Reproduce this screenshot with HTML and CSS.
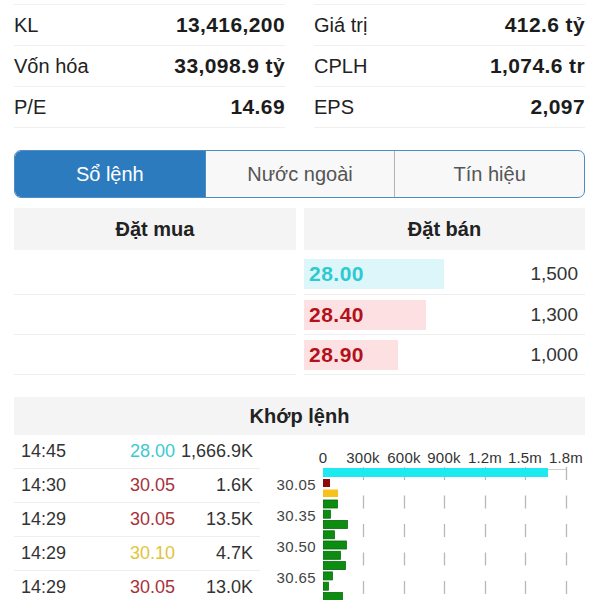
FILE: index.html
```html
<!DOCTYPE html>
<html lang="vi">
<head>
<meta charset="utf-8">
<title>Sổ lệnh</title>
<link rel="stylesheet" href="styles.css">
</head>
<body>
<div class="page">
  <section class="stats">
    <div class="col">
      <div class="row"><span class="lbl">KL</span><span class="val">13,416,200</span></div>
      <div class="row"><span class="lbl">Vốn hóa</span><span class="val">33,098.9 tỷ</span></div>
      <div class="row"><span class="lbl">P/E</span><span class="val">14.69</span></div>
    </div>
    <div class="col">
      <div class="row"><span class="lbl">Giá trị</span><span class="val">412.6 tỷ</span></div>
      <div class="row"><span class="lbl">CPLH</span><span class="val">1,074.6 tr</span></div>
      <div class="row"><span class="lbl">EPS</span><span class="val">2,097</span></div>
    </div>
  </section>

  <nav class="tabs">
    <div class="tab active">Sổ lệnh</div>
    <div class="tab">Nước ngoài</div>
    <div class="tab">Tín hiệu</div>
  </nav>

  <section class="book">
    <div class="book-col">
      <div class="book-head">Đặt mua</div>
      <div class="book-row"></div>
      <div class="book-row"></div>
      <div class="book-row"></div>
    </div>
    <div class="book-col sell">
      <div class="book-head">Đặt bán</div>
      <div class="book-row"><span class="bar ref" style="width:140px">28.00</span><span class="qty">1,500</span></div>
      <div class="book-row"><span class="bar up" style="width:122px">28.40</span><span class="qty">1,300</span></div>
      <div class="book-row"><span class="bar up" style="width:94px">28.90</span><span class="qty">1,000</span></div>
    </div>
  </section>

  <section class="match">
    <div class="match-head">Khớp lệnh</div>
    <div class="match-body">
      <div class="trades">
        <div class="trade"><span>14:45</span><span class="p ref">28.00</span><span class="v">1,666.9K</span></div>
        <div class="trade"><span>14:30</span><span class="p up">30.05</span><span class="v">1.6K</span></div>
        <div class="trade"><span>14:29</span><span class="p up">30.05</span><span class="v">13.5K</span></div>
        <div class="trade"><span>14:29</span><span class="p ceil">30.10</span><span class="v">4.7K</span></div>
        <div class="trade"><span>14:29</span><span class="p up">30.05</span><span class="v">13.0K</span></div>
      </div>
      <svg class="chart" width="338" height="165" viewBox="262 435 338 165" xmlns="http://www.w3.org/2000/svg">
        <g class="xlabels" text-anchor="middle">
          <text x="323" y="462.5">0</text>
          <text x="363" y="462.5">300k</text>
          <text x="404" y="462.5">600k</text>
          <text x="444" y="462.5">900k</text>
          <text x="485" y="462.5">1.2m</text>
          <text x="525" y="462.5">1.5m</text>
          <text x="566" y="462.5">1.8m</text>
        </g>
        <line x1="323" y1="469.5" x2="567" y2="469.5" stroke="#cfcfcf" stroke-width="1"/>
        <g stroke="#b8b8b8" stroke-width="1.3" stroke-dasharray="13 15.5">
          <line x1="363.5" y1="467" x2="363.5" y2="600"/>
          <line x1="404.5" y1="467" x2="404.5" y2="600"/>
          <line x1="444.5" y1="467" x2="444.5" y2="600"/>
          <line x1="485.5" y1="467" x2="485.5" y2="600"/>
          <line x1="525.5" y1="467" x2="525.5" y2="600"/>
          <line x1="566.5" y1="467" x2="566.5" y2="600"/>
        </g>
        <g class="ylabels" text-anchor="end">
          <text x="316" y="489.5">30.05</text>
          <text x="316" y="520.5">30.35</text>
          <text x="316" y="551.5">30.50</text>
          <text x="316" y="582.5">30.65</text>
        </g>
        <rect x="323" y="468" width="225" height="9" fill="#1ee8f0"/>
        <rect x="323" y="479" width="7" height="8" fill="#8e0a0a"/>
        <rect x="323" y="489.5" width="15" height="7.5" fill="#f8c21c"/>
        <g fill="#0c8c10" stroke="#06690a" stroke-width="0.8">
          <rect x="323.4" y="500" width="14" height="8"/>
          <rect x="323.4" y="510.2" width="7" height="8"/>
          <rect x="323.4" y="520.5" width="24" height="8"/>
          <rect x="323.4" y="530.8" width="11" height="8"/>
          <rect x="323.4" y="541" width="23" height="8"/>
          <rect x="323.4" y="551.3" width="17" height="8"/>
          <rect x="323.4" y="561.6" width="22" height="8"/>
          <rect x="323.4" y="571.9" width="9" height="8"/>
          <rect x="323.4" y="582.2" width="5" height="8"/>
          <rect x="323.4" y="592.5" width="19" height="8"/>
        </g>
      </svg>
    </div>
  </section>
</div>
</body>
</html>
```
FILE: styles.css
```css
* { box-sizing: border-box; }

html, body {
  margin: 0;
  background: #ffffff;
}

body {
  font-family: "Liberation Sans", Arial, "Noto Sans", sans-serif;
  color: #222;
  overflow: hidden;
}

.page {
  width: 600px;
}

/* ---------- stats ---------- */
.stats {
  display: grid;
  grid-template-columns: 271px 271px;
  column-gap: 29px;
  padding: 4px 15px 0 14px;
}

.col {
  border-bottom: 1px solid #f0f0f0;
}

.row {
  display: flex;
  justify-content: space-between;
  align-items: center;
  height: 41px;
  border-top: 1px solid #f0f0f0;
}

.lbl {
  font-size: 20px;
  color: #222;
}

.val {
  font-size: 21px;
  font-weight: bold;
  letter-spacing: 0.4px;
  color: #1c1c1c;
}

/* ---------- tabs ---------- */
.tabs {
  display: grid;
  grid-template-columns: 1fr 1fr 1fr;
  margin: 22px 15px 0 14px;
  height: 48px;
  border: 1.5px solid #4f8cc2;
  border-radius: 7px;
  overflow: hidden;
  background: #f8f8f9;
}

.tab {
  display: flex;
  align-items: center;
  justify-content: center;
  font-size: 20px;
  color: #555;
  border-left: 1px solid #b3b3b3;
}

.tab:first-child {
  border-left: none;
}

.tab.active {
  background: #2d7bbf;
  color: #fff;
}

.tab.active + .tab {
  border-left-color: #4f8cc2;
}

/* ---------- order book ---------- */
.book {
  display: grid;
  grid-template-columns: 282px 281px;
  column-gap: 8px;
  margin: 10px 15px 0 14px;
}

.book-head {
  height: 42px;
  margin-bottom: 4px;
  background: #f4f4f4;
  display: flex;
  align-items: center;
  justify-content: center;
  font-size: 20px;
  font-weight: bold;
  color: #222;
}

.book-row {
  height: 41px;
  border-bottom: 1px solid #eeeeee;
  display: flex;
  align-items: center;
  justify-content: space-between;
  padding-right: 7px;
}

.book-row + .book-row {
  height: 40px;
}

.bar {
  height: 30px;
  display: flex;
  align-items: center;
  padding-left: 5px;
  font-size: 21px;
  font-weight: bold;
  letter-spacing: 0.5px;
}

.bar.ref {
  background: #dcf6f9;
  color: #2fc9d2;
}

.bar.up {
  background: #fde1e2;
  color: #b3101a;
}

.qty {
  font-size: 19px;
  color: #333;
}

/* ---------- matched trades ---------- */
.match {
  margin-top: 22px;
}

.match-head {
  margin: 0 15px 0 14px;
  height: 38px;
  background: #f4f4f4;
  display: flex;
  align-items: center;
  justify-content: center;
  font-size: 20px;
  font-weight: bold;
  color: #222;
}

.match-body {
  display: grid;
  grid-template-columns: 246px 338px;
  column-gap: 2px;
  padding-left: 14px;
}

.trade {
  display: grid;
  grid-template-columns: 95px 59px 78px;
  align-items: center;
  height: 34px;
  padding: 0 7px;
  border-bottom: 1px solid #eeeeee;
  font-size: 18px;
  color: #333;
}

.trade .p,
.trade .v {
  text-align: right;
}

.p.ref { color: #3ccad2; }
.p.up { color: #a8323a; }
.p.ceil { color: #e2c43a; }

.chart {
  display: block;
}

.xlabels text {
  font-family: "Liberation Sans", Arial, sans-serif;
  font-size: 15px;
  letter-spacing: 0.2px;
  fill: #333;
}

.ylabels text {
  font-family: "Liberation Sans", Arial, sans-serif;
  font-size: 15px;
  letter-spacing: 0.4px;
  fill: #444;
}
```
